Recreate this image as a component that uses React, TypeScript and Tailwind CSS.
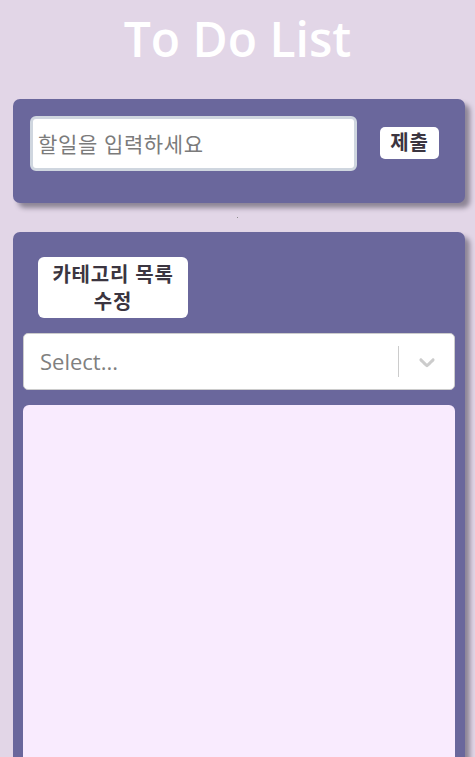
import React from "react";

const font = { fontFamily: '"Open Sans", "Noto Sans CJK KR", sans-serif' };

export default function App() {
  return (
    <div className="h-[757px] w-full bg-[#e2d6e7] overflow-hidden" style={font}>
      <h1 className="text-center text-white font-semibold text-[48px] leading-none pt-[15px] h-[99px]">
        To Do List
      </h1>

      {/* input card */}
      <div className="mx-[13px] w-[452px] h-[104px] rounded-[7px] bg-[#6a679c] shadow-[5px_5px_5px_#8d8596] flex items-start pt-[17px] pl-[17px]">
        <input
          placeholder="할일을 입력하세요"
          className="w-[327px] h-[55px] rounded-[6px] border-[3px] border-[#cfd6df] bg-white px-[5px] text-[21px] tracking-[0.03em] text-[#555] placeholder:text-[#7b7b7b] outline-none"
        />
        <button className="ml-[23px] mt-[11px] w-[59px] h-[32px] rounded-[5px] bg-white text-[20px] tracking-[0.04em] font-bold text-[#3b3540] leading-none">
          제출
        </button>
      </div>

      <div className="h-[29px] flex justify-center items-center">
        <div className="w-[1px] h-[1px] bg-[#8a8a8a]" />
      </div>

      {/* list card */}
      <div className="mx-[13px] w-[452px] h-[600px] rounded-[7px] bg-[#6a679c] shadow-[5px_5px_5px_#8d8596] px-[10px] pt-[25px]">
        <button className="ml-[15px] w-[150px] h-[61px] rounded-[6px] bg-white text-[20px] tracking-[0.04em] font-bold text-[#3b3540] leading-[27px]">
          카테고리 목록
          <br />
          수정
        </button>

        <div className="mt-[15px] h-[57px] rounded-[5px] border border-[#cccccc] bg-white flex items-center">
          <span className="flex-1 pl-[16px] text-[22px] text-[#808080]">Select...</span>
          <div className="w-[1px] h-[31px] bg-[#cccccc]" />
          <div className="w-[55px] flex justify-center">
            <svg width="26" height="26" viewBox="0 0 20 20" fill="#cccccc">
              <path d="M4.516 7.548c0.436-0.446 1.043-0.481 1.576 0l3.908 3.747 3.908-3.747c0.533-0.481 1.141-0.446 1.574 0 0.436 0.445 0.408 1.197 0 1.615-0.406 0.418-4.695 4.502-4.695 4.502-0.217 0.223-0.502 0.335-0.787 0.335s-0.57-0.112-0.789-0.335c0 0-4.287-4.084-4.695-4.502s-0.436-1.17 0-1.615z" />
            </svg>
          </div>
        </div>

        <div className="mt-[15px] h-[400px] rounded-[6px] bg-[#f9ebfe]" />
      </div>
    </div>
  );
}
